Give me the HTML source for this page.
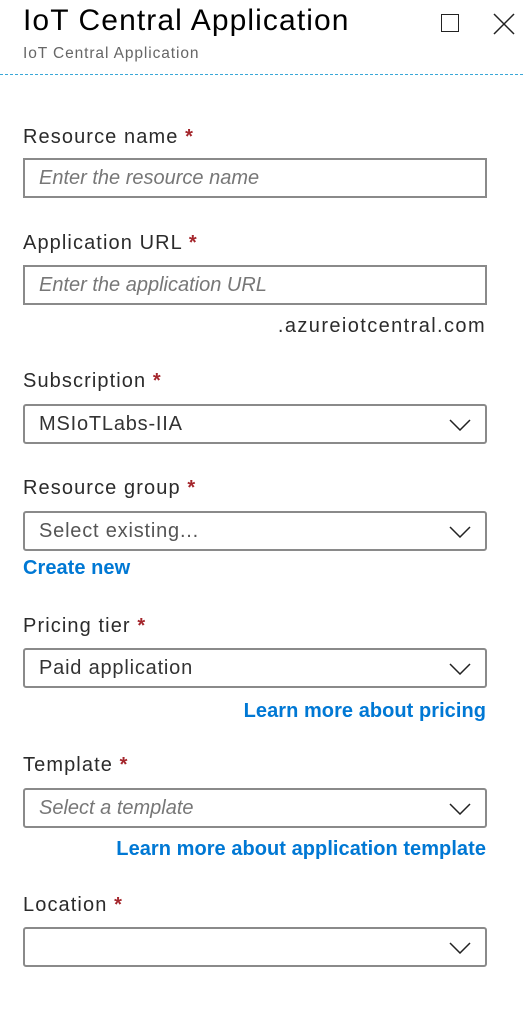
<!DOCTYPE html>
<html><head><meta charset="utf-8"><style>
body{margin:0;width:523px;height:1014px;background:#fff;font-family:"Segoe UI","Liberation Sans",sans-serif;position:relative;overflow:hidden}
.a{position:absolute}
.t{left:23px;top:4px;font-size:30px;color:#000;white-space:nowrap;letter-spacing:1.1px}
.st{left:23px;top:45px;font-size:15.5px;color:#666;letter-spacing:0.9px}
.hr{left:0;top:74px;width:523px;border-top:1px dashed #3aa8d8}
.l{left:23px;font-size:20px;color:#2b2b2b;line-height:24px;white-space:nowrap;letter-spacing:1.1px}
.l b{color:#a4262c;font-weight:bold}
.in{left:23px;border:2px solid #8a8a8a;font-size:20px;line-height:36px;padding-left:14px;box-sizing:border-box;width:464px;height:40px;color:#333;white-space:nowrap;letter-spacing:0.8px}
.dd{border-radius:3px}
.ph{font-style:italic;color:#777;letter-spacing:0}
.dd svg{position:absolute;right:14px;top:13px}
.lk{color:#0078d4;font-size:20px;line-height:24px;white-space:nowrap;font-weight:bold;letter-spacing:0.05px}
</style></head><body>
<div class="a t">IoT Central Application</div>
<div class="a st">IoT Central Application</div>
<div class="a" style="left:441px;top:14px;width:18px;height:18px;border:1.5px solid #222;box-sizing:border-box"></div>
<svg class="a" style="left:492px;top:12px" width="24" height="24"><path d="M2 2L22 22M22 2L2 22" stroke="#222" stroke-width="1.5"/></svg>
<div class="a hr"></div>

<div class="a l" style="top:125px">Resource name <b>*</b></div>
<div class="a in" style="top:158px"><span class="ph">Enter the resource name</span></div>

<div class="a l" style="top:231px">Application URL <b>*</b></div>
<div class="a in" style="top:265px"><span class="ph">Enter the application URL</span></div>
<div class="a l" style="left:auto;right:37px;top:314px;letter-spacing:1.4px">.azureiotcentral.com</div>

<div class="a l" style="top:369px">Subscription <b>*</b></div>
<div class="a in dd" style="top:404px">MSIoTLabs-IIA<svg width="22" height="12"><path d="M1 1L11 11L21 1" fill="none" stroke="#222" stroke-width="1.5"/></svg></div>

<div class="a l" style="top:476px">Resource group <b>*</b></div>
<div class="a in dd" style="top:511px;color:#555">Select existing...<svg width="22" height="12"><path d="M1 1L11 11L21 1" fill="none" stroke="#222" stroke-width="1.5"/></svg></div>
<div class="a lk" style="left:23px;top:556px">Create new</div>

<div class="a l" style="top:614px">Pricing tier <b>*</b></div>
<div class="a in dd" style="top:648px">Paid application<svg width="22" height="12"><path d="M1 1L11 11L21 1" fill="none" stroke="#222" stroke-width="1.5"/></svg></div>
<div class="a lk" style="right:37px;top:699px">Learn more about pricing</div>

<div class="a l" style="top:753px">Template <b>*</b></div>
<div class="a in dd" style="top:788px"><span class="ph">Select a template</span><svg width="22" height="12"><path d="M1 1L11 11L21 1" fill="none" stroke="#222" stroke-width="1.5"/></svg></div>
<div class="a lk" style="right:37px;top:837px">Learn more about application template</div>

<div class="a l" style="top:893px">Location <b>*</b></div>
<div class="a in dd" style="top:927px"><svg width="22" height="12"><path d="M1 1L11 11L21 1" fill="none" stroke="#222" stroke-width="1.5"/></svg></div>
</body></html>
